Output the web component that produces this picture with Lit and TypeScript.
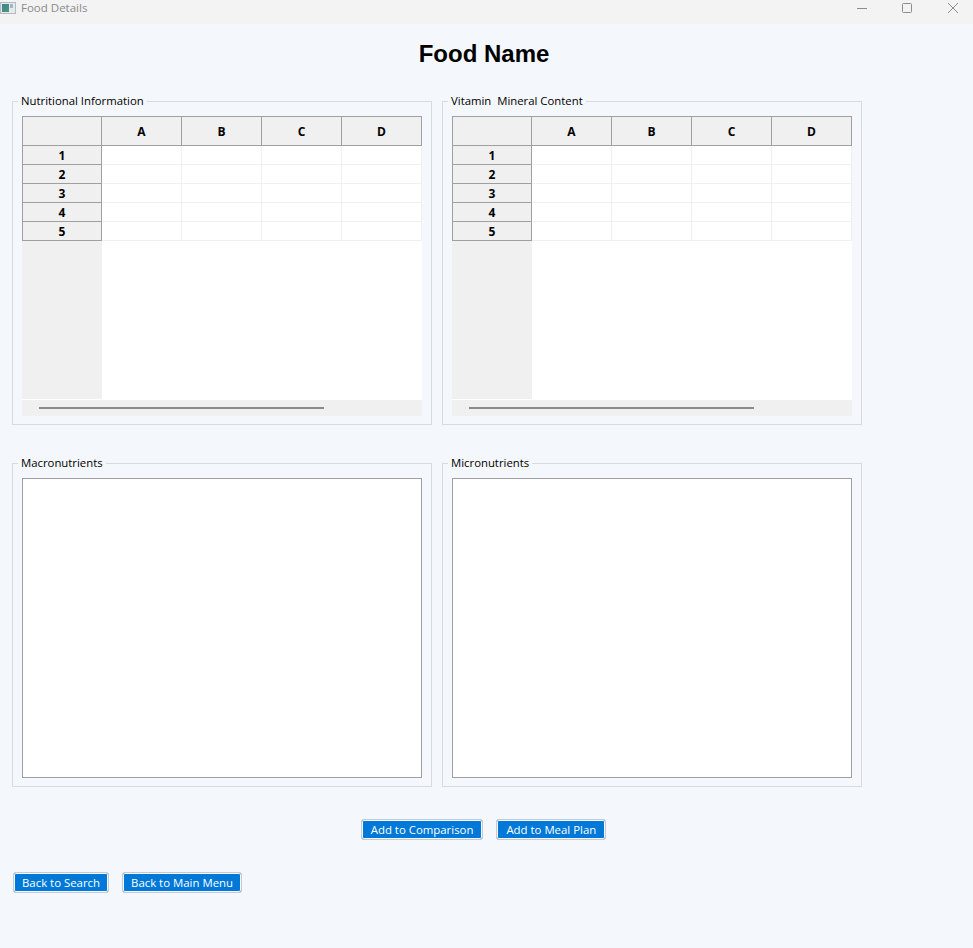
import { LitElement, html, css } from "lit";
import { customElement } from "lit/decorators.js";

const COLS = ["A", "B", "C", "D"];
const ROWS = ["1", "2", "3", "4", "5"];

@customElement("app-root")
export class AppRoot extends LitElement {
  static styles = css`
    :host { display: block; width: 973px; height: 948px; background: #f4f7fc; font-family: "Open Sans", "Noto Sans", sans-serif; color: #000; overflow: hidden; }
    * { box-sizing: border-box; }
    .titlebar { height: 24px; padding-bottom: 8px; background: #f3f3f3; display: flex; align-items: center; }
    .app-icon { width: 16px; height: 16px; flex: none; }
    .win-title { margin-left: 5px; font-size: 11.5px; color: #8a8a8a; line-height: 16px; }
    .controls { margin-left: auto; display: flex; align-items: center; height: 16px; }
    .controls svg { display: block; width: 12px; height: 12px; }
    .controls .c1 { margin-right: 33px; }
    .controls .c2 { margin-right: 34px; }
    .controls .c3 { margin-right: 14px; }
    h1 { margin: 0; width: 968px; height: 77px; padding-top: 15px; text-align: center; font: bold 24px/30px "Liberation Sans", Arial, sans-serif; }
    .grid { display: grid; grid-template-columns: 420px 420px; column-gap: 10px; row-gap: 38px; margin-left: 12px; }
    .group { position: relative; height: 324px; border: 1px solid #d7dbe0; padding: 14px 9px 0; }
    .legend { position: absolute; left: 5px; top: -9px; padding: 0 3px; background: #f4f7fc; font-size: 11.35px; line-height: 16px; white-space: nowrap; }
    .table { width: 400px; height: 300px; background: #fff; display: flex; flex-direction: column; }
    .head { display: flex; height: 30px; flex: none; }
    .hcell { width: 80px; flex: none; background: #f0f0f0; border: 1px solid #a0a0a0; border-left: none; display: flex; align-items: center; justify-content: center; font-weight: 700; font-size: 12px; }
    .hcell.corner { border-left: 1px solid #a0a0a0; }
    .row { display: flex; height: 19px; flex: none; }
    .rh { width: 80px; flex: none; background: #f0f0f0; border: 1px solid #a0a0a0; border-top: none; display: flex; align-items: center; justify-content: center; font-weight: 700; font-size: 12px; }
    .cell { width: 80px; flex: none; border-right: 1px solid #f0f0f0; border-bottom: 1px solid #f0f0f0; }
    .empty { height: 158px; flex: none; display: flex; }
    .empty .side { width: 80px; background: #f0f0f0; }
    .hbar { margin-top: 1px; height: 16px; flex: none; background: #f0f0f0; display: flex; align-items: center; padding-left: 17px; }
    .thumb { width: 285px; height: 2px; background: #8a8a8a; }
    .chart { width: 400px; height: 300px; background: #fff; border: 1px solid #a0a0a0; }
    .actions { width: 967px; display: flex; justify-content: center; gap: 13px; margin-top: 32px; }
    .actions button { padding: 0 9px; }
    .back { display: flex; gap: 13px; margin: 32px 0 0 13px; }
    button { height: 21px; padding: 0 8px; background: #0078d7; color: #fff; border: 1px solid #c6cacf; border-radius: 3px; box-shadow: inset 0 0 0 1px #f4f7fc; font: 11.4px/17px "Open Sans", "Noto Sans", sans-serif; white-space: nowrap; }
  `;

  private tableView() {
    return html`<div class="table">
      <div class="head"><div class="hcell corner"></div>${COLS.map((c) => html`<div class="hcell">${c}</div>`)}</div>
      ${ROWS.map((r) => html`<div class="row"><div class="rh">${r}</div>${COLS.map(() => html`<div class="cell"></div>`)}</div>`)}
      <div class="empty"><div class="side"></div></div>
      <div class="hbar"><div class="thumb"></div></div>
    </div>`;
  }

  render() {
    return html`
      <div class="titlebar">
        <svg class="app-icon" viewBox="0 0 16 16">
          <defs><linearGradient id="ig" x1="0" y1="0" x2="1" y2="1"><stop offset="0" stop-color="#3f7f9c"/><stop offset="1" stop-color="#4f9a6f"/></linearGradient></defs>
          <rect x="0.5" y="2.5" width="15" height="11" fill="#e6eaec" stroke="#b4babd"/>
          <rect x="2" y="4" width="7" height="8" fill="url(#ig)"/>
          <rect x="10" y="4" width="3" height="4" fill="#9db8cc"/>
        </svg>
        <span class="win-title">Food Details</span>
        <div class="controls">
          <svg class="c1" viewBox="0 0 12 12"><path d="M1 6.5H11" stroke="#8c8c8c" fill="none"/></svg>
          <svg class="c2" viewBox="0 0 12 12"><rect x="1.5" y="1.5" width="9" height="9" rx="1" stroke="#8c8c8c" fill="none"/></svg>
          <svg class="c3" viewBox="0 0 12 12"><path d="M1 1L11 11M11 1L1 11" stroke="#8c8c8c" fill="none"/></svg>
        </div>
      </div>
      <h1>Food Name</h1>
      <div class="grid">
        <div class="group"><span class="legend">Nutritional Information</span>${this.tableView()}</div>
        <div class="group"><span class="legend">Vitamin&nbsp; Mineral Content</span>${this.tableView()}</div>
        <div class="group"><span class="legend">Macronutrients</span><div class="chart"></div></div>
        <div class="group"><span class="legend">Micronutrients</span><div class="chart"></div></div>
      </div>
      <div class="actions"><button>Add to Comparison</button><button>Add to Meal Plan</button></div>
      <div class="back"><button>Back to Search</button><button>Back to Main Menu</button></div>
    `;
  }
}
